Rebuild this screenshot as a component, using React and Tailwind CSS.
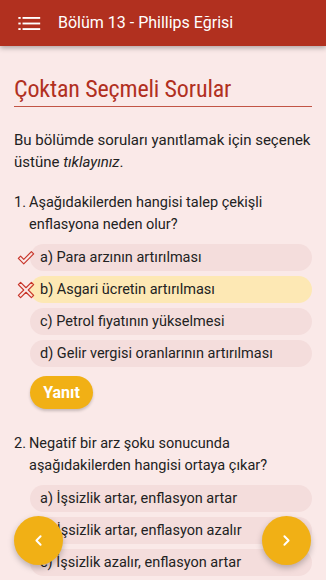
import React from 'react';

const Check = () => (
  <svg viewBox="0 0 20 20" className="w-[18px] h-[18px] shrink-0" fill="none" stroke="#c8352a" strokeWidth="1.3" strokeLinejoin="round">
    <path d="M1.5 10.5 L4 8 L7.5 11.5 L16 3 L18.5 5.5 L7.5 16.5 Z" />
  </svg>
);

const Cross = () => (
  <svg viewBox="0 0 20 20" className="w-[18px] h-[18px] shrink-0" fill="none" stroke="#c8352a" strokeWidth="1.3" strokeLinejoin="round">
    <path d="M4 1.5 L10 7.5 L16 1.5 L18.5 4 L12.5 10 L18.5 16 L16 18.5 L10 12.5 L4 18.5 L1.5 16 L7.5 10 L1.5 4 Z" />
  </svg>
);

const Option = ({ text, mark, selected }) => (
  <div className="flex items-center">
    <div className="w-[21px] flex justify-end -mr-[5px] relative z-10">
      {mark === 'ok' && <Check />}
      {mark === 'no' && <Cross />}
    </div>
    <div className={`flex-1 h-[27px] rounded-full flex items-center pl-[10px] text-[14.5px] text-[#222] ${selected ? 'bg-[#fde8b4]' : 'bg-[#f4dddc]'}`}>
      {text}
    </div>
  </div>
);

const Question = ({ num, lines, options, top }) => (
  <div className={top}>
    <div className="flex text-[14.5px] leading-[22px] text-[#222]">
      <span className="w-[15px] shrink-0">{num}.</span>
      <div>{lines.map((l, i) => <div key={i}>{l}</div>)}</div>
    </div>
    <div className="mt-[8px] flex flex-col gap-[5px]">
      {options.map((o, i) => <Option key={i} {...o} />)}
    </div>
  </div>
);

export default function App() {
  return (
    <div className="w-[326px] h-[580px] overflow-hidden relative bg-[#fae9e8]" style={{ fontFamily: 'Roboto, "Liberation Sans", sans-serif' }}>
      <header className="h-[46px] bg-[#b1301f] flex items-center shadow-[0_2px_5px_rgba(0,0,0,0.3)] relative z-20">
        <svg viewBox="0 0 24 14" className="w-[23px] h-[13px] ml-[18px]" fill="#fff">
          <rect x="0" y="0" width="2.5" height="2" />
          <rect x="4.5" y="0" width="19" height="2" />
          <rect x="0" y="6" width="2.5" height="2" />
          <rect x="4.5" y="6" width="19" height="2" />
          <rect x="0" y="12" width="2.5" height="2" />
          <rect x="4.5" y="12" width="19" height="2" />
        </svg>
        <h1 className="ml-[17px] text-white text-[16px]">Bölüm 13 - Phillips Eğrisi</h1>
      </header>

      <main className="px-[14px]">
        <h2 className="mt-[28px] text-[#b1301f] text-[24px] leading-[30px] tracking-[-0.15px] pb-[2px] border-b-[1.5px] border-[#c25445]" style={{ fontFamily: '"Roboto Condensed", "Liberation Sans Narrow", Roboto, sans-serif' }}>
          Çoktan Seçmeli Sorular
        </h2>

        <p className="mt-[22px] text-[15px] leading-[22px] text-[#222]">
          Bu bölümde soruları yanıtlamak için seçenek üstüne <em>tıklayınız</em>.
        </p>

        <Question
          top="mt-[19px]"
          num={1}
          lines={['Aşağıdakilerden hangisi talep çekişli', 'enflasyona neden olur?']}
          options={[
            { text: 'a) Para arzının artırılması', mark: 'ok' },
            { text: 'b) Asgari ücretin artırılması', mark: 'no', selected: true },
            { text: 'c) Petrol fiyatının yükselmesi' },
            { text: 'd) Gelir vergisi oranlarının artırılması' },
          ]}
        />

        <button className="mt-[9px] ml-4 w-[63px] h-[33px] rounded-full bg-[#f1b015] text-white font-bold text-[16px] shadow-[0_2px_3px_rgba(0,0,0,0.2)]">
          Yanıt
        </button>

        <Question
          top="mt-[24px]"
          num={2}
          lines={['Negatif bir arz şoku sonucunda', 'aşağıdakilerden hangisi ortaya çıkar?']}
          options={[
            { text: 'a) İşsizlik artar, enflasyon artar' },
            { text: 'b) İşsizlik artar, enflasyon azalır' },
            { text: 'c) İşsizlik azalır, enflasyon artar' },
          ]}
        />
      </main>

      <button className="absolute left-[14px] top-[516px] w-[49px] h-[49px] rounded-full bg-[#f1b015] text-white flex items-center justify-center shadow-[0_3px_6px_rgba(0,0,0,0.25)] z-30">
        <svg viewBox="0 0 10 16" className="w-[7px] h-[13px]" fill="none" stroke="#fff" strokeWidth="2.8" strokeLinecap="round" strokeLinejoin="round">
          <path d="M8 2 L2 8 L8 14" />
        </svg>
      </button>
      <button className="absolute left-[262px] top-[516px] w-[49px] h-[49px] rounded-full bg-[#f1b015] text-white flex items-center justify-center shadow-[0_3px_6px_rgba(0,0,0,0.25)] z-30">
        <svg viewBox="0 0 10 16" className="w-[7px] h-[13px]" fill="none" stroke="#fff" strokeWidth="2.8" strokeLinecap="round" strokeLinejoin="round">
          <path d="M2 2 L8 8 L2 14" />
        </svg>
      </button>
    </div>
  );
}
